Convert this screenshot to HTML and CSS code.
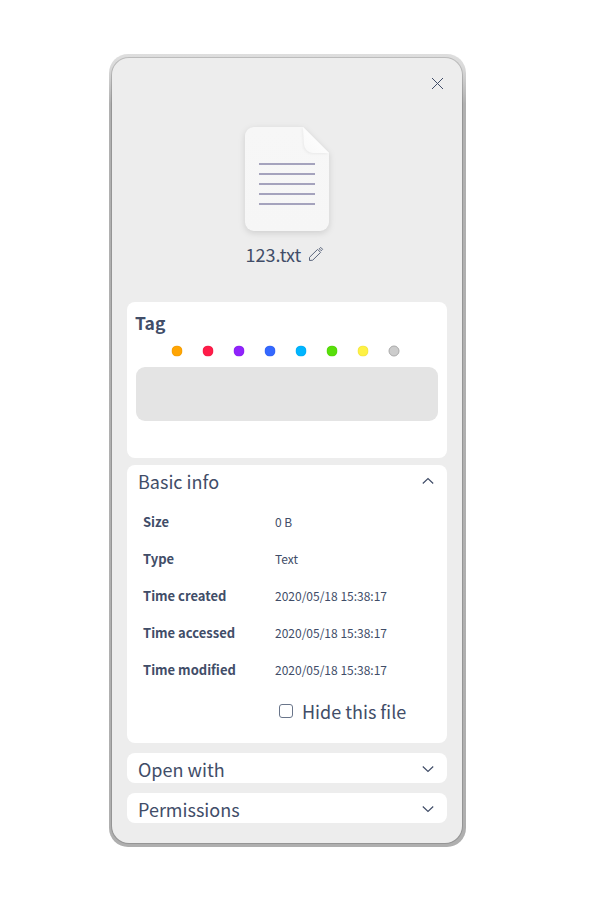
FILE: index.html
```html
<!DOCTYPE html>
<html lang="en">
<head>
<meta charset="utf-8">
<title>123.txt</title>
<link rel="stylesheet" href="styles.css">
</head>
<body>
<div class="frame">
<main class="panel">
  <header class="titlebar">
    <svg class="close" width="13" height="13" viewBox="0 0 13 13"><path d="M1 1l11 11M12 1L1 12"/></svg>
  </header>
  <section class="file">
    <svg class="doc" width="108" height="128" viewBox="0 0 108 128">
      <defs>
        <linearGradient id="paper" x1="0" y1="0" x2="0" y2="1"><stop offset="0" stop-color="#f7f7f7"/><stop offset="1" stop-color="#f6f6f6"/></linearGradient>
        <linearGradient id="fold" x1="0" y1="1" x2="1" y2="0"><stop offset="0" stop-color="#f8f8f8"/><stop offset=".5" stop-color="#fcfcfc"/></linearGradient>
      </defs>
      <path class="sheet" d="M21 12H70L96 38V107a9 9 0 0 1-9 9H21a9 9 0 0 1-9-9V21a9 9 0 0 1 9-9z"/>
      <path class="corner" d="M70 12L96 38H80a9 9 0 0 1-9-9z"/>
      <path class="lines" d="M26 49H82M26 59H82M26 69H82M26 79H82M26 89H82"/>
    </svg>
    <div class="name">
      <span>123.txt</span>
      <svg class="pencil" width="16" height="16" viewBox="0 0 16 16"><path d="M1.500 14.500V11.300L9.600 3.400L12.600 6.400L4.700 14.200zM11.300 2.800L12.700 1.400L14.600 3.300L13.200 4.700z"/></svg>
    </div>
  </section>
  <section class="card tags">
    <h2>Tag</h2>
    <div class="dots">
      <i class="dot orange"></i><i class="dot red"></i><i class="dot purple"></i><i class="dot blue"></i><i class="dot cyan"></i><i class="dot green"></i><i class="dot yellow"></i><i class="dot gray"></i>
    </div>
    <div class="tag-input"></div>
  </section>
  <section class="card info">
    <div class="head"><span>Basic info</span><svg class="chevron" width="12" height="8" viewBox="0 0 12 8"><path d="M.8 6.500L6 1.500l5.200 5"/></svg></div>
    <dl>
      <dt>Size</dt><dd>0 B</dd>
      <dt>Type</dt><dd>Text</dd>
      <dt>Time created</dt><dd>2020/05/18 15:38:17</dd>
      <dt>Time accessed</dt><dd>2020/05/18 15:38:17</dd>
      <dt>Time modified</dt><dd>2020/05/18 15:38:17</dd>
    </dl>
    <div class="hide"><span class="check"></span><span class="label">Hide this file</span></div>
  </section>
  <section class="card fold open"><div class="head"><span>Open with</span><svg class="chevron" width="12" height="8" viewBox="0 0 12 8"><path d="M.8 1.500L6 6.500l5.200-5"/></svg></div></section>
  <section class="card fold"><div class="head"><span>Permissions</span><svg class="chevron" width="12" height="8" viewBox="0 0 12 8"><path d="M.8 1.500L6 6.500l5.200-5"/></svg></div></section>
</main>
</div>
</body>
</html>
```
FILE: styles.css
```css
* { box-sizing: border-box; }
body {
  margin: 0;
  padding: 54px 0 0 109px;
  background: #fff;
  color: #414d68;
  font-family: "Noto Sans CJK SC", "Noto Sans", sans-serif;
  font-size: 18px;
}
svg { display: block; fill: none; }
.frame {
  width: 357px;
  height: 793px;
  padding: 4px 4px 4px 3px;
  border-radius: 19px;
  background: linear-gradient(#dedede 0, #dadada 12px, #b0b0b0 50px, #afafaf 100%);
}
.panel {
  width: 350px;
  height: 785px;
  padding: 0 15px;
  border-radius: 17px;
  background: #ededed;
  box-shadow: 0 0 0 1px rgba(0, 0, 0, .15);
}
.titlebar {
  height: 57px;
  padding: 19px 3px 0 0;
  display: flex;
  justify-content: flex-end;
}
.close { stroke: #414d68; stroke-width: 1; }
.file {
  height: 187px;
  display: flex;
  flex-direction: column;
  align-items: center;
}
.doc { margin-bottom: -4px; filter: drop-shadow(0 2px 3px rgba(0, 0, 0, .13)); }
.sheet { fill: url(#paper); }
.corner { fill: url(#fold); filter: drop-shadow(-1px 1px 1px rgba(0, 0, 0, .05)); }
.lines { stroke: #a5a3bd; stroke-width: 2; }
.name {
  display: flex;
  gap: 7px;
  line-height: 30px;
  margin-left: -4px;
}
.pencil { margin-top: 7px; stroke: #5a657c; stroke-width: 1; stroke-linejoin: round; }
.card { border-radius: 8px; background: #fff; overflow: hidden; }
.tags { height: 156px; padding: 5px 9px 0 8px; margin-bottom: 7px; }
h2 { margin: 0; font-size: 17.5px; font-weight: 700; line-height: 31px; }
.dots { display: flex; gap: 20px; padding: 8px 0 0 37px; transform: translate(-.5px, -.5px); }
.dot { width: 11px; height: 11px; border-radius: 50%; border: 1px solid rgba(0, 0, 0, .04); }
.orange { background: #ffa503; }
.red { background: #ff1c49; }
.purple { background: #9023fc; }
.blue { background: #3468ff; }
.cyan { background: #00b5ff; }
.green { background: #58df0a; }
.yellow { background: #fef144; }
.gray { background: #ccc; border-color: #aaa; }
.tag-input { height: 54px; margin: 10px 0 0 1px; border-radius: 9px; background: #e4e4e4; }
.info { height: 278px; margin-bottom: 10px; }
.head {
  display: flex;
  align-items: flex-start;
  justify-content: space-between;
  height: 32px;
  padding: 0 13px 0 11px;
  line-height: 33px;
}
.chevron { margin-top: 12px; stroke: #414d68; stroke-width: 1.200; }
dl {
  display: grid;
  grid-template-columns: 132px 1fr;
  grid-auto-rows: 37px;
  align-items: center;
  margin: 6px 0 0;
  padding-left: 16px;
  font-size: 13px;
}
dt { font-weight: 700; }
dd { margin: 0; font-size: 12px; }
.hide { display: flex; align-items: flex-start; gap: 9px; padding-left: 152px; margin-top: 8px; line-height: 31px; }
.check { width: 14px; height: 14px; margin-top: 8px; border: 1px solid #69758a; border-radius: 3px; }
.fold { height: 30px; }
.open { margin-bottom: 10px; }
```
